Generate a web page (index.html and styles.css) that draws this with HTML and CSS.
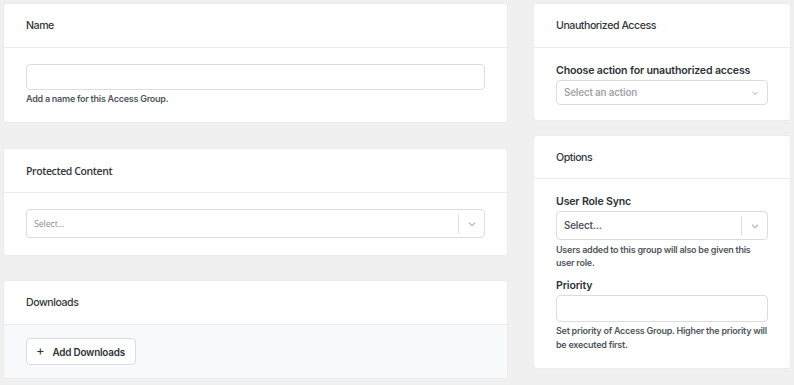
FILE: index.html
```html
<!DOCTYPE html>
<html lang="en">

<head>
  <meta charset="UTF-8">
  <title>Access Group</title>
  <link rel="stylesheet" href="styles.css">
</head>

<body>
  <main class="layout">
    <div class="kolonne venstre">
      <section class="kort kort-navn">
        <h2 class="kort-titel">Name</h2>
        <div class="kort-indhold">
          <input class="felt" type="text">
          <p class="hjaelp">Add a name for this Access Group.</p>
        </div>
      </section>

      <section class="kort kort-indhold-valg">
        <h2 class="kort-titel open">Protected Content</h2>
        <div class="kort-indhold">
          <div class="vaelger open-vaelger">
            <span class="pladsholder">Select...</span>
            <span class="skille"></span>
            <span class="pil">
              <svg width="10" height="10" viewBox="0 0 10 10"><path d="M2 3.8 L5 6.6 L8 3.8" fill="none" stroke="#b5b8bc" stroke-width="1.2"/></svg>
            </span>
          </div>
        </div>
      </section>

      <section class="kort kort-downloads">
        <h2 class="kort-titel">Downloads</h2>
        <div class="kort-indhold graa">
          <button class="knap"><span class="plus">+</span> Add Downloads</button>
        </div>
      </section>
    </div>

    <div class="kolonne hoejre">
      <section class="kort kort-adgang">
        <h2 class="kort-titel">Unauthorized Access</h2>
        <div class="kort-indhold">
          <label class="etiket">Choose action for unauthorized access</label>
          <div class="vaelger lille">
            <span class="pladsholder fed">Select an action</span>
            <span class="pil">
              <svg width="10" height="10" viewBox="0 0 10 10"><path d="M2.5 4 L5 6.4 L7.5 4" fill="none" stroke="#a7aaad" stroke-width="1"/></svg>
            </span>
          </div>
        </div>
      </section>

      <section class="kort kort-valg">
        <h2 class="kort-titel">Options</h2>
        <div class="kort-indhold">
          <label class="etiket">User Role Sync</label>
          <div class="vaelger">
            <span class="pladsholder moerk">Select...</span>
            <span class="skille"></span>
            <span class="pil">
              <svg width="10" height="10" viewBox="0 0 10 10"><path d="M2 3.8 L5 6.6 L8 3.8" fill="none" stroke="#b5b8bc" stroke-width="1.2"/></svg>
            </span>
          </div>
          <p class="hjaelp taet">Users added to this group will also be given this<br>user role.</p>
          <label class="etiket prio">Priority</label>
          <input class="felt prio-felt" type="text">
          <p class="hjaelp">Set priority of Access Group. Higher the priority will<br>be executed first.</p>
        </div>
      </section>
    </div>
  </main>
</body>

</html>
```

FILE: styles.css
```css
* {
  box-sizing: border-box;
}

body {
  margin: 0;
  background: #f0f0f1;
  font-family: Inter, "Liberation Sans", sans-serif;
  color: #2c3338;
}

.layout {
  display: grid;
  grid-template-columns: 503px 256px;
  column-gap: 27px;
  padding: 4px;
  align-items: start;
}

.kolonne {
  display: flex;
  flex-direction: column;
}

.venstre {
  gap: 27px;
}

.venstre .kort-downloads {
  margin-top: -1px;
}

.hoejre {
  gap: 16px;
}

.kort {
  background: #fff;
  border-radius: 3px;
  box-shadow: 0 0 0 1px #ececed;
  overflow: hidden;
}

.kort-titel {
  margin: 0;
  height: 44px;
  display: flex;
  align-items: center;
  padding: 0 22px;
  font-size: 10.6px;
  letter-spacing: -0.45px;
  font-weight: 500;
  color: #32373c;
  border-bottom: 1px solid #ececed;
}

.kort-titel.open {
  font-family: "Open Sans", sans-serif;
  font-weight: 600;
  font-size: 10.5px;
  letter-spacing: -0.4px;
}

.kort-valg .kort-titel {
  height: 43px;
}

.kort-indhold {
  padding: 16px 22px 16px;
}

.kort-indhold-valg .kort-indhold {
  padding-bottom: 17px;
}

.kort-adgang .kort-indhold,
.kort-valg .kort-indhold {
  padding-top: 15px;
  padding-bottom: 15px;
}

.kort-valg .kort-indhold {
  padding-bottom: 16px;
}

.kort-indhold.graa {
  background: #f8f9fa;
  padding: 13px 22px 13px;
}

.felt {
  display: block;
  width: 100%;
  height: 26px;
  border: 1px solid #dcdcde;
  border-radius: 4px;
  background: #fff;
}

.prio-felt {
  height: 27px;
}

.hjaelp {
  margin: 2px 0 0;
  font-size: 9px;
  letter-spacing: -0.25px;
  font-weight: 600;
  line-height: 14px;
  color: #50575e;
}

.hjaelp.taet {
  line-height: 13px;
  margin-top: 3px;
}

.etiket {
  display: block;
  font-size: 10.6px;
  letter-spacing: -0.17px;
  font-weight: 600;
  line-height: 16px;
  color: #2c3338;
  margin-bottom: 1px;
}

.etiket.prio {
  margin-top: 9px;
  margin-bottom: 1px;
}

.vaelger {
  display: flex;
  align-items: center;
  height: 29px;
  border: 1px solid #dcdcde;
  border-radius: 4px;
  background: #fff;
}

.vaelger.lille {
  height: 25px;
}

.pladsholder {
  flex: 1;
  padding-left: 7px;
  font-size: 9.8px;
  letter-spacing: -0.15px;
  color: #8c8f94;
}

.pladsholder.fed {
  font-weight: 600;
  color: #a2a5a9;
}

.pladsholder.moerk {
  font-weight: 600;
  color: #50575e;
}

.open-vaelger .pladsholder {
  font-family: "Open Sans", sans-serif;
  font-size: 9px;
  letter-spacing: -0.2px;
  color: #8c8f94;
}

.skille {
  width: 1px;
  height: 19px;
  background: #dcdcde;
}

.pil {
  width: 25px;
  display: flex;
  justify-content: center;
  align-items: center;
}

.knap {
  display: flex;
  align-items: center;
  gap: 8px;
  height: 27px;
  padding: 0 10px 0 9px;
  border: 1px solid #dcdcde;
  border-radius: 4px;
  background: #fff;
  font-family: Inter, "Liberation Sans", sans-serif;
  font-size: 9.9px;
  letter-spacing: -0.2px;
  font-weight: 600;
  color: #2c3338;
}

.plus {
  font-size: 13px;
  font-weight: 400;
  line-height: 1;
  margin-top: -2px;
}
```
